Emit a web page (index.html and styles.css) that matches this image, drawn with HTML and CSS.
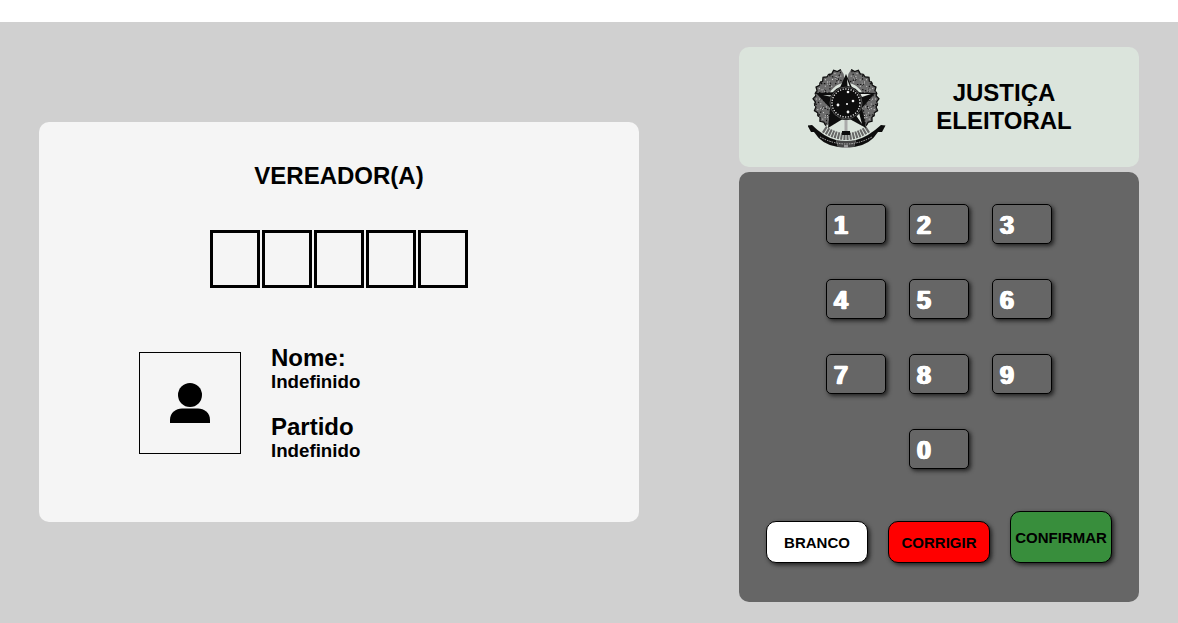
FILE: index.html
```html
<!DOCTYPE html>
<html lang="pt-BR">
<head>
<meta charset="utf-8">
<title>Urna eletrônica</title>
<link rel="stylesheet" href="styles.css">
</head>
<body>
<div class="top-strip"></div>
<main class="urna">
  <section class="screen">
    <h2 class="office">VEREADOR(A)</h2>
    <div class="digits">
      <span class="digit"></span><span class="digit"></span><span class="digit"></span><span class="digit"></span><span class="digit"></span>
    </div>
    <div class="candidate">
      <div class="photo">
        <svg class="person" viewBox="0 0 42 42" width="42" height="42">
          <circle cx="21" cy="12" r="12"/>
          <path d="M1 40 V37 C1 29.500 7 25.500 13 25.500 H29 C35 25.500 41 29.500 41 37 V40 Z"/>
        </svg>
      </div>
      <div class="info">
        <h2 class="label">Nome:</h2>
        <h3 class="value">Indefinido</h3>
        <h2 class="label label-gap">Partido</h2>
        <h3 class="value">Indefinido</h3>
      </div>
    </div>
  </section>
  <section class="console">
    <header class="brand">
      <svg class="emblem" viewBox="808 67 78 80" width="78" height="80">
        <defs>
          <filter id="soft" x="-5%" y="-5%" width="110%" height="110%"><feGaussianBlur stdDeviation="0.35"/></filter>
          <g id="lobe">
            <path fill="#6c6c6c" d="M846 66.500 L849 69 L853 68.500 L854 74 L852 82 H840 L838 74 L839 68.500 L843 69 Z"/>
            <path fill="none" stroke="#121212" stroke-width="1.100" stroke-dasharray="1.500 1.500" d="M840 70 L851 81 M852 71 L842 81"/>
            <path fill="none" stroke="#d4d4d4" stroke-width="1" stroke-dasharray="1 2" d="M846 70 V83 M841 75 H852"/>
            <path fill="none" stroke="#111" stroke-width="1.300" d="M839 69 L843 69.500 L846 67 L849 69.500 L853 69"/>
          </g>
        </defs>
        <g filter="url(#soft)">
          <use href="#lobe" transform="rotate(-128 846 100)"/>
          <use href="#lobe" transform="rotate(-107 846 100)"/>
          <use href="#lobe" transform="rotate(-86 846 100)"/>
          <use href="#lobe" transform="rotate(-65 846 100)"/>
          <use href="#lobe" transform="rotate(-44 846 100)"/>
          <use href="#lobe" transform="rotate(-22 846 100)"/>
          <use href="#lobe" transform="rotate(22 846 100)"/>
          <use href="#lobe" transform="rotate(44 846 100)"/>
          <use href="#lobe" transform="rotate(65 846 100)"/>
          <use href="#lobe" transform="rotate(86 846 100)"/>
          <use href="#lobe" transform="rotate(107 846 100)"/>
          <use href="#lobe" transform="rotate(128 846 100)"/>
          <path fill="none" stroke="#666" stroke-width="7" stroke-dasharray="2 1" d="M824 128 Q846 143 868 128"/>
          <path fill="#0c0c0c" d="M846 73 L854 91 L875 92 L862 107 L866 127 L846 116 L828 127 L830 107 L816 92 L838 91 Z"/>
          <path fill="#e4e9e4" d="M847 78 L852 91 L848 91 Z M871 93 L860 93 L856 98 Z M862 123 L858 108 L855 113 Z"/>
          <path fill="#b8beb8" d="M823 94 L834 94 L836 97 Z"/>
          <circle cx="846" cy="102" r="17" fill="#0c0c0c"/>
          <circle cx="846" cy="102" r="14" fill="none" stroke="#e2e2e2" stroke-width="1.400" stroke-dasharray="1.200 1.500"/>
          <circle cx="846" cy="102" r="16" fill="none" stroke="#666" stroke-width=".8"/>
          <g fill="#f4f4f4">
            <circle cx="848" cy="91" r="1.300"/><circle cx="838" cy="104" r="1.400"/><circle cx="847" cy="103" r="1.100"/><circle cx="853" cy="100" r="1.300"/><circle cx="848" cy="111" r="1.400"/>
          </g>
          <path fill="#aaa" d="M844.500 119 H847.500 V134 H844.500 Z"/>
          <rect x="842" y="130" width="8" height="4" fill="#111"/>
          <path fill="#0a0a0a" d="M807.500 124.500 L812 124 Q824 136 836 139 L838 146 Q822 144 814 131 L811 131 Z"/>
          <path fill="#0a0a0a" d="M885.500 124.500 L881 124 Q868 136 856 139 L854 146 Q870 144 878 131 L882 131 Z"/>
          <path fill="#444" d="M836 139 Q846 141 856 139 L854 146 Q846 147 838 146 Z"/>
          <path fill="none" stroke="#ccc" stroke-width=".9" stroke-dasharray="1.500 1" d="M820 136 Q846 150 872 136"/>
          <rect x="844" y="144" width="4" height="3" fill="#999"/>
        </g>
      </svg>
      <h2 class="brand-name">JUSTIÇA<br>ELEITORAL</h2>
    </header>
    <div class="panel">
      <div class="keys">
        <button class="key">1</button>
        <button class="key">2</button>
        <button class="key">3</button>
        <button class="key">4</button>
        <button class="key">5</button>
        <button class="key">6</button>
        <button class="key">7</button>
        <button class="key">8</button>
        <button class="key">9</button>
        <button class="key key-zero">0</button>
      </div>
      <div class="actions">
        <button class="action action-white">BRANCO</button>
        <button class="action action-red">CORRIGIR</button>
        <button class="action action-green">CONFIRMAR</button>
      </div>
    </div>
  </section>
</main>
</body>
</html>
```
FILE: styles.css
```css
* {
  box-sizing: border-box;
}

html,
body {
  margin: 0;
  height: 100%;
  overflow: hidden;
  background: #fff;
  font-family: "Liberation Sans", Arial, sans-serif;
}

.top-strip {
  height: 22px;
}

.urna {
  height: 601px;
  background: #d0d0d0;
  display: flex;
  justify-content: center;
  align-items: flex-start;
  gap: 100px;
}

.screen {
  width: 600px;
  height: 400px;
  margin-top: 100px;
  padding-top: 40px;
  background: #f5f5f5;
  border-radius: 10px;
  display: flex;
  flex-direction: column;
  align-items: center;
}

.office {
  margin: 0;
  font-size: 24px;
  line-height: 28px;
  font-weight: bold;
  color: #000;
}

.digits {
  margin-top: 40px;
  display: flex;
  gap: 2px;
}

.digit {
  width: 50px;
  height: 58px;
  border: 3px solid #000;
}

.candidate {
  align-self: flex-start;
  margin-top: 64px;
  margin-left: 100px;
  display: flex;
  gap: 30px;
}

.photo {
  width: 102px;
  height: 102px;
  border: 1px solid #000;
  display: flex;
  align-items: center;
  justify-content: center;
}

.person {
  display: block;
  margin-top: 1px;
  fill: #000;
}

.info {
  margin-top: -8px;
  color: #000;
}

.label {
  margin: 0;
  font-size: 24px;
  line-height: 27px;
}

.label-gap {
  margin-top: 21px;
}

.value {
  margin: 0;
  font-size: 18.72px;
  line-height: 21px;
}

.console {
  width: 400px;
  margin-top: 25px;
  display: flex;
  flex-direction: column;
  gap: 5px;
}

.brand {
  height: 120px;
  padding-left: 69px;
  background: #dbe4dc;
  border-radius: 10px;
  display: flex;
  align-items: center;
  gap: 50px;
}

.emblem {
  display: block;
  margin-top: 1px;
}

.brand-name {
  margin: 0;
  width: 136px;
  font-size: 24px;
  line-height: 28px;
  text-align: center;
  color: #000;
}

.panel {
  height: 430px;
  padding-top: 32px;
  background: #666;
  border-radius: 10px;
}

.keys {
  display: grid;
  grid-template-columns: repeat(3, 60px);
  gap: 35px 23px;
  justify-content: center;
}

.key {
  width: 60px;
  height: 40px;
  padding: 3px 0 0 7px;
  background: #666;
  border: 1px solid #000;
  border-radius: 5px;
  box-shadow: 2px 2px 4px #222;
  color: #fff;
  font-family: "Liberation Sans", Arial, sans-serif;
  font-size: 25px;
  font-weight: bold;
  text-align: left;
  text-shadow: 1px 0 #fff, -1px 0 #fff;
  -webkit-text-stroke: 0.4px #fff;
}

.key-zero {
  grid-column: 2;
}

.actions {
  margin-top: 42px;
  display: flex;
  justify-content: center;
  align-items: flex-end;
  gap: 20px;
}

.action {
  width: 102px;
  height: 42px;
  padding: 0;
  border: 1px solid #000;
  border-radius: 10px;
  box-shadow: 2px 2px 4px #222;
  color: #000;
  font-family: "Liberation Sans", Arial, sans-serif;
  font-size: 15px;
  font-weight: bold;
}

.action-white {
  background: #fff;
}

.action-red {
  background: #f00;
}

.action-green {
  height: 52px;
  background: #388e3c;
}
```
